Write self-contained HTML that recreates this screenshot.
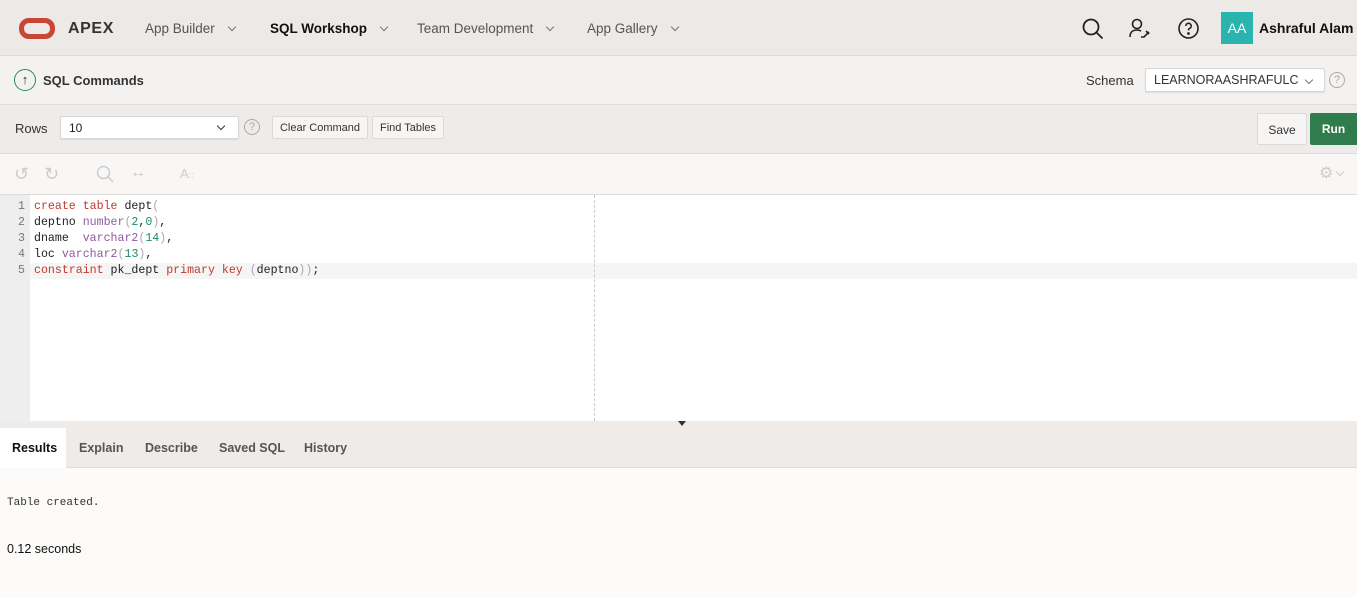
<!DOCTYPE html>
<html><head><style>
*{box-sizing:border-box;margin:0;padding:0}
body{width:1357px;height:597px;overflow:hidden;font-family:"Liberation Sans",sans-serif;background:#fcfbfa;position:relative;color:#222}
.a{position:absolute}
.hdr{left:0;top:0;width:1357px;height:56px;background:#ece9e6;border-bottom:1px solid #dcd9d6}
.nav{font-size:13.5px;color:#555;top:21px}
.chev{display:inline-block;width:6px;height:6px;border-right:1px solid #777;border-bottom:1px solid #777;transform:rotate(45deg);margin-left:14px;position:relative;top:-3px}
.t2{left:0;top:56px;width:1357px;height:49px;background:#f4f2f0;border-bottom:1px solid #dedbd8}
.t3{left:0;top:105px;width:1357px;height:49px;background:#eeecea;border-bottom:1px solid #dedbd8}
.t4{left:0;top:154px;width:1357px;height:41px;background:#f8f7f6;border-bottom:1px solid #dedbd8}
.btn{background:#f6f5f4;border:1px solid #dcd9d6;border-radius:2px;font-size:11px;color:#333;text-align:center}
.sel{background:#fff;border:1px solid #d8d5d2;border-radius:2px;font-size:12px;box-shadow:0 1px 1px rgba(0,0,0,.08)}
.help{width:16px;height:16px;border:1px solid #aaa;border-radius:50%;color:#aaa;font-size:11px;text-align:center;line-height:14px}
.code{font-family:"Liberation Mono",monospace;font-size:11.6px;line-height:16px;white-space:pre}
.k{color:#c0392b}.ty{color:#8e5a9e}.n{color:#1e8a6e}.p{color:#aaa}
</style></head><body>
<div class="a hdr"></div>
<div class="a" style="left:19px;top:18px;width:36px;height:21px;border:5px solid #c74634;border-radius:10px"></div>
<div class="a" style="left:68px;top:20px;font-size:16px;font-weight:bold;color:#333;letter-spacing:.6px">APEX</div>
<div class="a nav" style="left:145px">App Builder<span class="chev"></span></div>
<div class="a nav" style="left:270px;color:#111;font-weight:bold">SQL Workshop<span class="chev"></span></div>
<div class="a nav" style="left:417px">Team Development<span class="chev"></span></div>
<div class="a nav" style="left:587px">App Gallery<span class="chev"></span></div>
<svg class="a" style="left:1081px;top:17px" width="24" height="24" fill="none" stroke="#222" stroke-width="1.8"><circle cx="10" cy="10" r="7.5"/><path d="M15.5 15.5l6 6"/></svg>
<svg class="a" style="left:1128px;top:17px" width="24" height="24" fill="none" stroke="#222" stroke-width="1.6"><circle cx="9" cy="7" r="4.5"/><path d="M2 20c0-5 3-7 7-7 2 0 3 .5 4 1M13 20h3l5-5M18 14l3 3"/></svg>
<svg class="a" style="left:1177px;top:17px" width="23" height="23" fill="none" stroke="#222" stroke-width="1.6"><circle cx="11.5" cy="11.5" r="9.5"/><path d="M8.8 9a2.7 2.7 0 1 1 3.5 2.6c-.7.3-.8.8-.8 1.8"/><circle cx="11.5" cy="16.5" r=".6" fill="#222"/></svg>
<div class="a" style="left:1221px;top:12px;width:32px;height:32px;background:#2bb3b0;color:#fff;font-size:14px;text-align:center;line-height:32px">AA</div>
<div class="a" style="left:1259px;top:20px;font-size:14px;font-weight:bold;color:#111">Ashraful Alam</div>
<div class="a t2"></div>
<div class="a" style="left:14px;top:69px;width:22px;height:22px;border:1px solid #2e8a57;border-radius:50%;text-align:center;font-size:13px;line-height:20px;color:#333">↑</div>
<div class="a" style="left:43px;top:73px;font-size:13px;font-weight:bold;color:#333">SQL Commands</div>
<div class="a" style="left:1086px;top:73px;font-size:13px;color:#333">Schema</div>
<div class="a sel" style="left:1145px;top:68px;width:180px;height:24px;padding:4px 8px;font-size:12.5px;color:#333">LEARNORAASHRAFULC<span class="chev" style="position:absolute;right:12px;top:8px"></span></div>
<div class="a help" style="left:1329px;top:72px">?</div>
<div class="a t3"></div>
<div class="a" style="left:15px;top:121px;font-size:13px;color:#333">Rows</div>
<div class="a sel" style="left:60px;top:116px;width:179px;height:23px;padding:4px 8px">10<span class="chev" style="position:absolute;right:14px;top:6px;border-color:#333"></span></div>
<div class="a help" style="left:244px;top:119px">?</div>
<div class="a btn" style="left:272px;top:116px;width:96px;height:23px;line-height:23px">Clear Command</div>
<div class="a btn" style="left:372px;top:116px;width:72px;height:23px;line-height:23px">Find Tables</div>
<div class="a btn" style="left:1257px;top:113px;width:50px;height:32px;line-height:32px;font-size:12px">Save</div>
<div class="a" style="left:1310px;top:113px;width:47px;height:32px;background:#2f7c4c;color:#fff;font-weight:bold;font-size:12px;text-align:center;line-height:32px;border-radius:2px 0 0 2px">Run</div>
<div class="a t4"></div>
<div class="a" style="left:14px;top:164px;color:#ccc;font-size:18px">↺&nbsp;&nbsp;&nbsp;↻</div>
<svg class="a" style="left:96px;top:165px" width="18" height="18" fill="none" stroke="#ccc" stroke-width="1.4"><circle cx="7.5" cy="7.5" r="6"/><path d="M12 12l5 5"/></svg>
<div class="a" style="left:130px;top:164px;color:#ccc;font-size:16px">↔</div>
<div class="a" style="left:180px;top:166px;color:#ccc;font-size:13px">A<span style="font-size:9px">::</span></div>
<div class="a" style="left:1319px;top:163px;color:#ccc;font-size:16px">⚙<span class="chev" style="margin-left:4px;border-color:#ccc"></span></div>
<div class="a" style="left:0;top:195px;width:30px;height:226px;background:#eeeeee"></div>
<div class="a" style="left:30px;top:195px;width:1327px;height:226px;background:#fff"></div>
<div class="a" style="left:30px;top:263px;width:1327px;height:16px;background:#f5f5f5"></div>
<div class="a" style="left:594px;top:195px;height:226px;border-left:1px dashed #ccc"></div>
<div class="a code" style="left:18px;top:199px;color:#777">1
2
3
4
5</div>
<div class="a code" style="left:34px;top:199px;color:#222"><span class="k">create table</span> dept<span class="p">(</span>
deptno <span class="ty">number</span><span class="p">(</span><span class="n">2</span>,<span class="n">0</span><span class="p">)</span>,
dname  <span class="ty">varchar2</span><span class="p">(</span><span class="n">14</span><span class="p">)</span>,
loc <span class="ty">varchar2</span><span class="p">(</span><span class="n">13</span><span class="p">)</span>,
<span class="k">constraint</span> pk_dept <span class="k">primary key</span> <span class="p">(</span>deptno<span class="p">))</span>;</div>
<div class="a" style="left:0;top:421px;width:1357px;height:47px;background:#eeebe8;border-bottom:1px solid #dedbd8"></div>
<div class="a" style="left:678px;top:421px;width:0;height:0;border:4px solid transparent;border-top:5px solid #333"></div>
<div class="a" style="left:0;top:428px;width:66px;height:40px;background:#fff"></div>
<div class="a" style="left:12px;top:441px;font-size:12.5px;font-weight:bold;color:#111">Results</div>
<div class="a" style="left:79px;top:441px;font-size:12.5px;font-weight:bold;color:#555">Explain</div>
<div class="a" style="left:145px;top:441px;font-size:12.5px;font-weight:bold;color:#555">Describe</div>
<div class="a" style="left:219px;top:441px;font-size:12.5px;font-weight:bold;color:#555">Saved SQL</div>
<div class="a" style="left:304px;top:441px;font-size:12.5px;font-weight:bold;color:#555">History</div>
<div class="a" style="left:7px;top:497px;font-family:'Liberation Mono',monospace;font-size:11px;color:#333">Table created.</div>
<div class="a" style="left:7px;top:542px;font-size:12.5px;color:#111">0.12 seconds</div>
</body></html>
